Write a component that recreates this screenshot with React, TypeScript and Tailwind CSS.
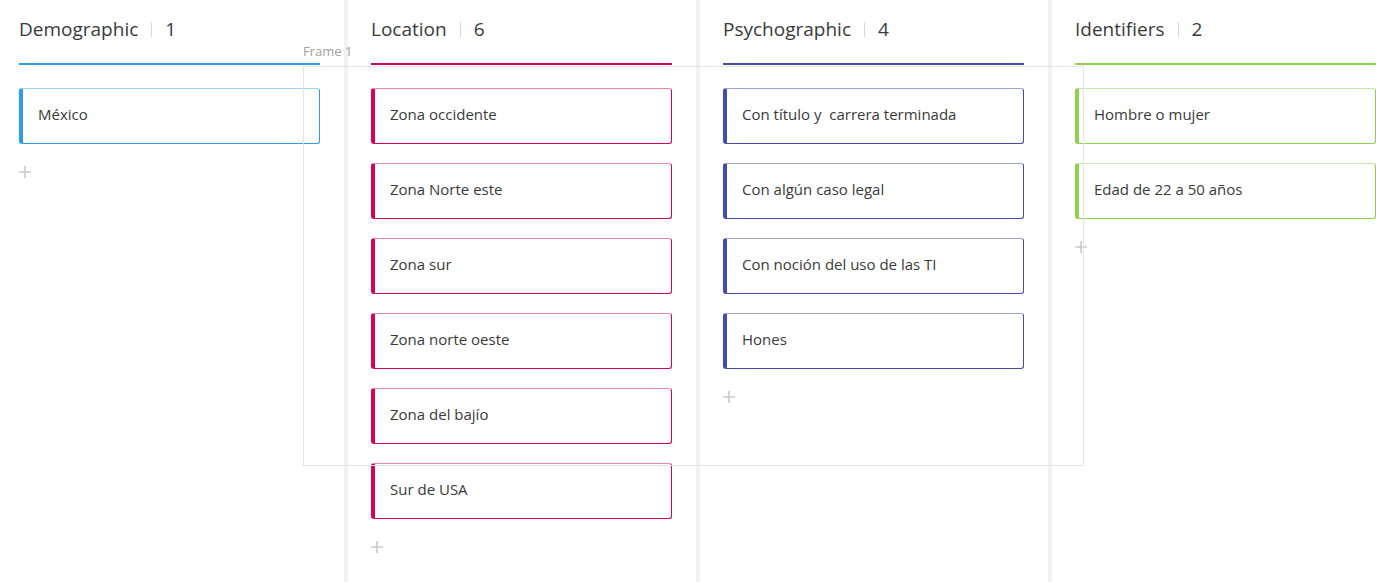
type Column = {
  title: string;
  color: string;
  items: string[];
};

const columns: Column[] = [
  { title: 'Demographic', color: 'blue', items: ['México'] },
  {
    title: 'Location',
    color: 'pink',
    items: ['Zona occidente', 'Zona Norte este', 'Zona sur', 'Zona norte oeste', 'Zona del bajío', 'Sur de USA'],
  },
  {
    title: 'Psychographic',
    color: 'indigo',
    items: ['Con título y  carrera terminada', 'Con algún caso legal', 'Con noción del uso de las TI', 'Hones'],
  },
  { title: 'Identifiers', color: 'green', items: ['Hombre o mujer', 'Edad de 22 a 50 años'] },
];

const tone: Record<string, { line: string; card: string }> = {
  blue: { line: 'border-[#2d9bf0]', card: 'border-[#2d9bf0] border-t-[#9fd2f8]' },
  pink: { line: 'border-[#d5005f]', card: 'border-[#d5005f] border-t-[#ea88b3]' },
  indigo: { line: 'border-[#414bb2]', card: 'border-[#414bb2] border-t-[#9ea3d8]' },
  green: { line: 'border-[#8fd14f]', card: 'border-[#8fd14f] border-t-[#c6e8a6]' },
};

function AddIcon() {
  return (
    <svg width="12" height="12" viewBox="0 0 12 12" className="block">
      <path d="M6 0v12M0 6h12" stroke="#c9c9c9" strokeWidth="1.6" />
    </svg>
  );
}

function BoardColumn({ col, first }: { col: Column; first: boolean }) {
  const t = tone[col.color];
  return (
    <div
      className={
        first
          ? 'h-full w-[344px] shrink-0 pl-[19px] pr-[24px]'
          : 'h-full w-[352px] shrink-0 border-l-4 border-[#f1f1f1] pl-[23px] pr-[24px]'
      }
    >
      <div className={`flex h-[65px] items-start border-b-2 pt-[16px] ${t.line}`}>
        <span className="text-[19px] leading-[26px] text-[#3a3a3a]">{col.title}</span>
        <span className="mx-[13px] mt-[6px] h-[15px] w-px bg-[#d6d6d6]" />
        <span className="text-[19px] leading-[26px] text-[#3a3a3a]">{col.items.length}</span>
      </div>
      <div className="mt-[23px] flex flex-col gap-[19px]">
        {col.items.map((item) => (
          <div
            key={item}
            className={`flex h-[56px] items-center whitespace-pre rounded-[3px] border border-l-4 bg-white pb-[4px] pl-[15px] text-[15px] text-[#3a3a3a] ${t.card}`}
          >
            {item}
          </div>
        ))}
      </div>
      <div className="mt-[22px]">
        <AddIcon />
      </div>
    </div>
  );
}

export default function App() {
  return (
    <div className="relative h-[582px] w-[1395px] overflow-hidden bg-white font-['Open_Sans',sans-serif]">
      <div className="flex h-full">
        {columns.map((col, i) => (
          <BoardColumn key={col.title} col={col} first={i === 0} />
        ))}
      </div>
      <div className="pointer-events-none absolute left-[303px] top-[42px] text-[13px] leading-[18px] text-[#a0a0a0]">
        Frame 1
      </div>
      <div className="pointer-events-none absolute left-[303px] top-[66px] h-[400px] w-[781px] border border-[#e4e4e4]" />
    </div>
  );
}
